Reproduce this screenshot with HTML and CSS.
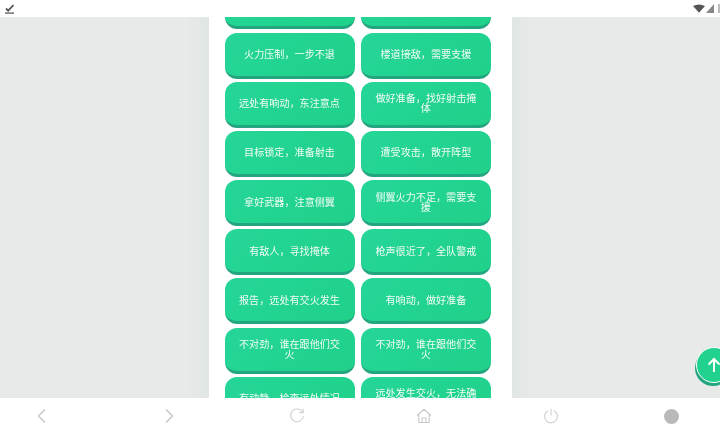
FILE: index.html
```html
<!DOCTYPE html>
<html lang="en">
<head>
    <meta charset="UTF-8">
    <title>Voice Lines</title>
    <link rel="stylesheet" href="styles.css">
</head>
<body>
    <div class="statusBar">
        <svg class="checkIcon" width="10" height="10" viewBox="0 0 10 10">
            <path d="M1 4.5 L3.2 6.6 L8.5 1" fill="none" stroke="#555" stroke-width="1.8"/>
            <rect x="0" y="8.4" width="9" height="1.4" fill="#666"/>
        </svg>
        <div class="statusRight">
            <svg width="12" height="9" viewBox="0 0 13 9"><path d="M0 1.8 Q6.5 -1.6 13 1.8 L6.5 9 Z" fill="#555"/></svg>
            <svg width="8" height="9" viewBox="0 0 8 9"><path d="M8 0 V9 H0 Z" fill="#888"/></svg>
            <span class="battery"></span>
        </div>
    </div>

    <div class="main">
        <div class="sideLeft"></div>
        <div class="centerColumn">
            <div class="buttonGrid">
                <button class="voiceBtn"></button>
                <button class="voiceBtn"></button>
                <button class="voiceBtn">火力压制，一步不退</button>
                <button class="voiceBtn">楼道接敌，需要支援</button>
                <button class="voiceBtn">远处有响动，东注意点</button>
                <button class="voiceBtn">做好准备，找好射击掩体</button>
                <button class="voiceBtn">目标锁定，准备射击</button>
                <button class="voiceBtn">遭受攻击，散开阵型</button>
                <button class="voiceBtn">拿好武器，注意侧翼</button>
                <button class="voiceBtn">侧翼火力不足，需要支援</button>
                <button class="voiceBtn">有敌人，寻找掩体</button>
                <button class="voiceBtn">枪声很近了，全队警戒</button>
                <button class="voiceBtn">报告，远处有交火发生</button>
                <button class="voiceBtn">有响动，做好准备</button>
                <button class="voiceBtn">不对劲，谁在跟他们交火</button>
                <button class="voiceBtn">不对劲，谁在跟他们交火</button>
                <button class="voiceBtn">有动静，检查远处情况</button>
                <button class="voiceBtn">远处发生交火，无法确认</button>
            </div>
        </div>
        <div class="sideRight"></div>
        <button class="topBtn">
            <svg width="14" height="16" viewBox="0 0 14 16"><path d="M7 15 V2 M1.5 7.5 L7 2 L12.5 7.5" fill="none" stroke="#fff" stroke-width="2"/></svg>
        </button>
    </div>

    <div class="navBar">
        <svg width="16" height="16" viewBox="0 0 16 16"><path d="M11 1.5 L4.5 8 L11 14.5" fill="none" stroke="#c4c4c4" stroke-width="1.3"/></svg>
        <svg width="16" height="16" viewBox="0 0 16 16"><path d="M5 1.5 L11.5 8 L5 14.5" fill="none" stroke="#c4c4c4" stroke-width="1.3"/></svg>
        <svg width="16" height="16" viewBox="0 0 16 16"><path d="M13.6 4.2 A6.4 6.4 0 1 0 14.4 8 M14.2 0.8 V4.6 H10.4" fill="none" stroke="#cfcfcf" stroke-width="1.1"/></svg>
        <svg width="16" height="16" viewBox="0 0 16 16"><path d="M1 7.5 L8 1.3 L15 7.5 M2.8 6.2 V14.5 H13.2 V6.2 M6 14.5 V10 H10 V14.5" fill="none" stroke="#c8c8c8" stroke-width="1.1"/></svg>
        <svg width="16" height="16" viewBox="0 0 16 16"><path d="M5 2.8 A6.4 6.4 0 1 0 11 2.8 M8 0.8 V7.5" fill="none" stroke="#cfcfcf" stroke-width="1.1"/></svg>
        <span class="navDot"></span>
    </div>
</body>
</html>
```

FILE: styles.css
```css
* {
    box-sizing: border-box;
}
html, body {
    margin: 0;
    height: 100%;
}
body {
    width: 720px;
    height: 434px;
    display: flex;
    flex-direction: column;
    overflow: hidden;
    background-color: #fff;
    font-family: "Noto Sans CJK SC", "Liberation Sans", sans-serif;
    filter: blur(0.35px);
}
.statusBar {
    height: 17px;
    flex: none;
    display: flex;
    align-items: center;
    justify-content: space-between;
    padding: 0 0 0 5px;
    background-color: #fff;
}
.statusRight {
    display: flex;
    align-items: center;
    gap: 1px;
    margin-bottom: 1px;
}
.battery {
    width: 2px;
    height: 9px;
    margin-left: 3px;
    background-color: #bbb;
}
.main {
    flex: 1;
    min-height: 0;
    display: flex;
    position: relative;
    overflow: hidden;
    background-color: #e8e9e9;
}
.sideLeft {
    width: 208.5px;
    flex: none;
    background: linear-gradient(90deg, #e8e9e9 90%, #dfe6e3 100%);
}
.sideRight {
    flex: 1;
    background: linear-gradient(270deg, #e8e9e9 91%, #dfe6e3 100%);
}
.centerColumn {
    width: 303.5px;
    flex: none;
    background-color: #fff;
}
.buttonGrid {
    display: grid;
    grid-template-columns: 130px 130px;
    grid-auto-rows: 46px;
    column-gap: 6.4px;
    row-gap: 3.2px;
    margin-top: -33.7px;
    padding-left: 16px;
}
.voiceBtn {
    padding: 0 12px;
    border: none;
    border-bottom: 3px solid #23a580;
    border-radius: 12px;
    color: #f2fbf7;
    font-family: inherit;
    font-size: 10.1px;
    line-height: 10px;
    text-align: center;
    background: linear-gradient(135deg, #25d698, #1fd189);
    cursor: pointer;
}
.topBtn {
    position: absolute;
    left: 696px;
    top: 330px;
    width: 36px;
    height: 36px;
    display: flex;
    align-items: center;
    padding: 0 0 0 10px;
    border: 1.5px solid #fff;
    border-radius: 50%;
    background-color: #20d28e;
    box-shadow: -1px 3px 0 #23a580;
    cursor: pointer;
}
.navBar {
    height: 36px;
    flex: none;
    display: grid;
    grid-template-columns: repeat(5, 127.4px) 113.4px;
    justify-items: center;
    align-items: center;
    margin-left: -21.9px;
    background-color: #fff;
}
.navDot {
    width: 15px;
    height: 15px;
    border-radius: 50%;
    background-color: #b9b9b9;
}
```
